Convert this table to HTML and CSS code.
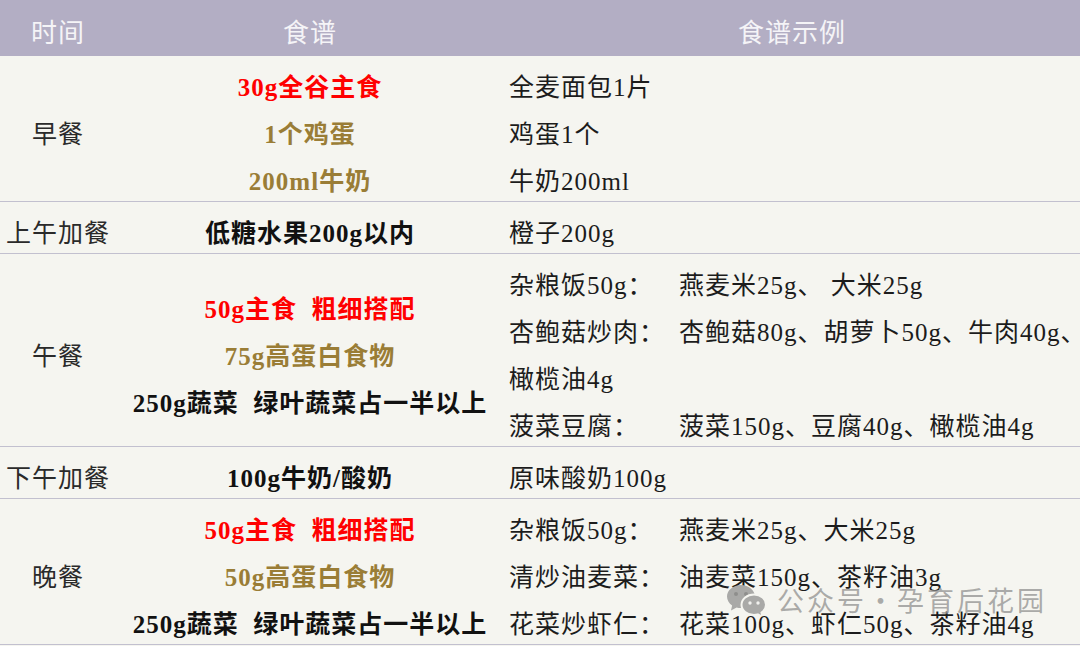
FILE: index.html
```html
<!DOCTYPE html>
<html lang="zh-CN">
<head>
<meta charset="utf-8">
<title>孕期食谱</title>
<link rel="stylesheet" href="styles.css">
</head>
<body>
<div class="table">
  <div class="thead">
    <div class="th">时间</div>
    <div class="th">食谱</div>
    <div class="th">食谱示例</div>
  </div>

  <div class="row">
    <div class="cell c1"><div class="line">早餐</div></div>
    <div class="cell c2">
      <div class="line red">30g全谷主食</div>
      <div class="line gold">1个鸡蛋</div>
      <div class="line gold">200ml牛奶</div>
    </div>
    <div class="cell c3">
      <div class="line">全麦面包1片</div>
      <div class="line">鸡蛋1个</div>
      <div class="line">牛奶200ml</div>
    </div>
  </div>

  <div class="row">
    <div class="cell c1"><div class="line">上午加餐</div></div>
    <div class="cell c2"><div class="line dark">低糖水果200g以内</div></div>
    <div class="cell c3"><div class="line">橙子200g</div></div>
  </div>

  <div class="row">
    <div class="cell c1"><div class="line">午餐</div></div>
    <div class="cell c2">
      <div class="line red">50g主食  粗细搭配</div>
      <div class="line gold">75g高蛋白食物</div>
      <div class="line dark">250g蔬菜  绿叶蔬菜占一半以上</div>
    </div>
    <div class="cell c3">
      <div class="line"><span class="label">杂粮饭50g：</span>燕麦米25g、 大米25g</div>
      <div class="line"><span class="label">杏鲍菇炒肉：</span>杏鲍菇80g、胡萝卜50g、牛肉40g、</div>
      <div class="line">橄榄油4g</div>
      <div class="line"><span class="label">菠菜豆腐：</span>菠菜150g、豆腐40g、橄榄油4g</div>
    </div>
  </div>

  <div class="row">
    <div class="cell c1"><div class="line">下午加餐</div></div>
    <div class="cell c2"><div class="line dark">100g牛奶/酸奶</div></div>
    <div class="cell c3"><div class="line">原味酸奶100g</div></div>
  </div>

  <div class="row">
    <div class="cell c1"><div class="line">晚餐</div></div>
    <div class="cell c2">
      <div class="line red">50g主食  粗细搭配</div>
      <div class="line gold">50g高蛋白食物</div>
      <div class="line dark">250g蔬菜  绿叶蔬菜占一半以上</div>
    </div>
    <div class="cell c3">
      <div class="line"><span class="label">杂粮饭50g：</span>燕麦米25g、大米25g</div>
      <div class="line"><span class="label">清炒油麦菜：</span>油麦菜150g、茶籽油3g</div>
      <div class="line"><span class="label">花菜炒虾仁：</span>花菜100g、虾仁50g、茶籽油4g</div>
    </div>
  </div>
</div>

<div class="watermark">
  <svg class="wx" width="42" height="32" viewBox="0 0 42 32" aria-hidden="true">
    <path d="M15 1C7.3 1 1 6.2 1 12.6c0 3.6 2 6.8 5.1 8.9L5 26.5l5.6-3c1.4.4 2.9.6 4.4.6 7.700 0 14-5.2 14-11.5S22.7 1 15 1z" fill="#a9a9a7"/>
    <circle cx="10" cy="10" r="2" fill="#8e8e8c"/>
    <circle cx="20" cy="10" r="2" fill="#8e8e8c"/>
    <path d="M28 10.5c-6.9 0-12.5 4.6-12.5 10.2S21.1 30.9 28 30.9c1.3 0 2.6-.2 3.8-.5l4.8 2.4-1.1-4.2c2.7-1.9 4.5-4.7 4.5-7.9 0-5.6-5.1-10.200-12-10.2z" fill="#a9a9a7" stroke="#f5f5f0" stroke-width="2"/>
    <circle cx="24" cy="19" r="1.7" fill="#f1f1ee"/>
    <circle cx="32" cy="19" r="1.7" fill="#f1f1ee"/>
  </svg>
  <span class="wm-text">公众号·孕育后花园</span>
</div>
</body>
</html>
```

FILE: styles.css
```css
html, body {
  margin: 0;
  padding: 0;
  background: #f5f5f0;
}

body {
  width: 1080px;
  height: 646px;
  overflow: hidden;
  position: relative;
}

.table {
  font-family: "Liberation Serif", "Noto Sans CJK SC", serif;
  font-size: 25px;
  letter-spacing: 1px;
  color: #1c1c1c;
}

.thead,
.row {
  display: grid;
  grid-template-columns: 116px 388px 1fr;
}

.thead {
  background: #b3aec4;
  height: 56px;
  box-sizing: border-box;
  padding-top: 6px;
}

.th {
  font-family: "Noto Sans CJK SC", sans-serif;
  font-size: 26px;
  letter-spacing: 1px;
  line-height: 50px;
  color: #f5f4f7;
  text-align: center;
}

.row {
  padding-top: 4px;
  border-bottom: 1px solid #c2c0cf;
}

.cell {
  display: flex;
  flex-direction: column;
}

.c1,
.c2 {
  justify-content: center;
  align-items: center;
}

.c1 {
  color: #2a2a2a;
}

.c2 {
  font-weight: 700;
}

.c3 {
  padding-left: 5px;
}

.line {
  height: 47px;
  line-height: 56px;
  white-space: pre;
}

.label {
  display: inline-block;
  width: 170px;
}

.red {
  color: #ff0000;
}

.gold {
  color: #9a7d36;
}

.dark {
  color: #111111;
}

.watermark {
  position: absolute;
  left: 726px;
  top: 582px;
  display: flex;
  align-items: center;
  gap: 9px;
}

.wx {
  display: block;
}

.wm-text {
  font-family: "Noto Sans CJK SC", sans-serif;
  font-size: 27px;
  letter-spacing: 3px;
  color: rgba(150, 150, 148, 0.78);
  line-height: 36px;
}
```
